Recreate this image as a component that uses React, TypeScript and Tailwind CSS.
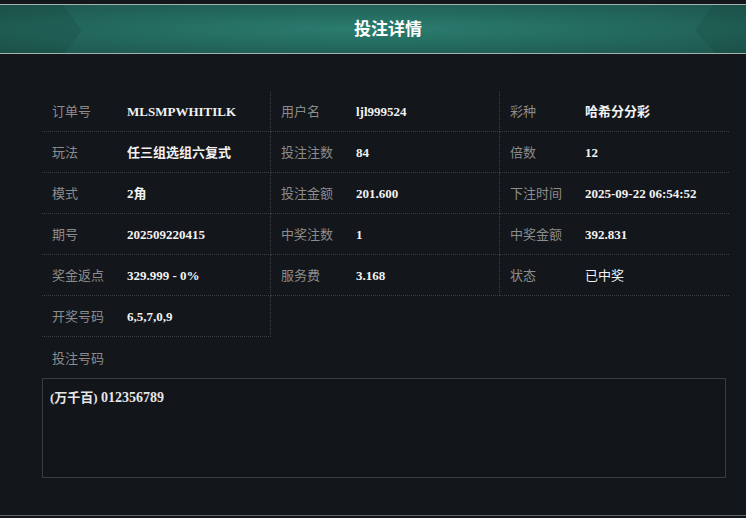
import React from 'react';

const rows = [
  [
    { label: '订单号', value: 'MLSMPWHITILK' },
    { label: '用户名', value: 'ljl999524' },
    { label: '彩种', value: '哈希分分彩' },
  ],
  [
    { label: '玩法', value: '任三组选组六复式' },
    { label: '投注注数', value: '84' },
    { label: '倍数', value: '12' },
  ],
  [
    { label: '模式', value: '2角' },
    { label: '投注金额', value: '201.600' },
    { label: '下注时间', value: '2025-09-22 06:54:52' },
  ],
  [
    { label: '期号', value: '202509220415' },
    { label: '中奖注数', value: '1' },
    { label: '中奖金额', value: '392.831' },
  ],
  [
    { label: '奖金返点', value: '329.999 - 0%' },
    { label: '服务费', value: '3.168' },
    { label: '状态', value: '已中奖', plain: true },
  ],
];

const labelFont = "font-['Noto_Sans_CJK_SC',sans-serif]";
const valueFont = "font-['Liberation_Serif','Noto_Sans_CJK_SC',serif]";

function Cell({ label, value, plain, last }: { label: string; value: string; plain?: boolean; last?: boolean }) {
  return (
    <div
      className={
        'flex h-[41px] w-[229px] items-center border-b border-dotted border-[#3b3f44] pl-[10px] ' +
        (last ? '' : 'border-r')
      }
    >
      <span className={`w-[75px] shrink-0 text-[13px] text-[#8c8c8c] ${labelFont}`}>{label}</span>
      {plain ? (
        <span className={`text-[13px] text-[#f2f2f2] ${labelFont}`}>{value}</span>
      ) : (
        <span className={`pt-px text-[13px] font-bold text-[#f2f2f2] ${valueFont}`}>{value}</span>
      )}
    </div>
  );
}

function Header() {
  return (
    <div className="relative mt-[4px] flex h-[50px] items-center justify-center border-y border-[#a3b3af] bg-[radial-gradient(ellipse_at_center,#2b7d6f_0%,#246b60_45%,#1e564e_100%)] pb-[2px] pl-[30px]">
      <svg className="absolute inset-0" width="746" height="48" viewBox="0 0 746 48">
        <polygon points="0,0 63,0 82,25 65,48 0,48" fill="rgba(0,0,0,0.07)" />
        <polygon points="746,0 713,0 695,25 715,48 746,48" fill="rgba(0,0,0,0.07)" />
      </svg>
      <h1 className={`relative text-[17px] font-bold text-white ${labelFont}`}>投注详情</h1>
    </div>
  );
}

export default function App() {
  return (
    <div className="flex h-[518px] w-[746px] flex-col bg-[#13161a]">
      <Header />
      <div className="flex-1 px-[42px] pt-[37px]">
        <div className="w-[687px]">
          {rows.map((row, i) => (
            <div key={i} className="flex">
              {row.map((c, j) => (
                <Cell key={c.label} label={c.label} value={c.value} plain={c.plain} last={j === 2} />
              ))}
            </div>
          ))}
          <div className="flex">
            <Cell label="开奖号码" value="6,5,7,0,9" />
          </div>
        </div>
        <div className="flex h-[41px] items-center pl-[10px]">
          <span className={`text-[13px] text-[#8c8c8c] ${labelFont}`}>投注号码</span>
        </div>
        <div className="h-[100px] w-[684px] border border-[#393c40] bg-[#121519] px-[7px] pt-[5px]">
          <span className={`text-[13px] font-bold text-[#e6e6e6] ${valueFont}`}>
            (万千百) <span className="text-[14px]">012356789</span>
          </span>
        </div>
      </div>
      <div className="h-px bg-[#62676b]" />
      <div className="h-[2px] bg-[#13161a]" />
    </div>
  );
}
